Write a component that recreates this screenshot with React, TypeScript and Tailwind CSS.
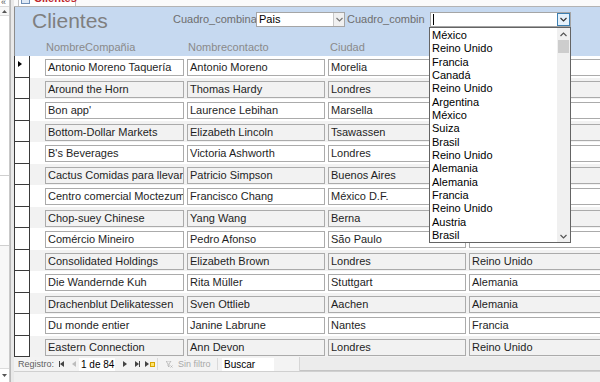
import React from "react";

// country of rows 1-9 sits under the open list, so it's left blank here
const records: [string, string, string, string][] = [
  ["Antonio Moreno Taquería", "Antonio Moreno", "Morelia", ""],
  ["Around the Horn", "Thomas Hardy", "Londres", ""],
  ["Bon app'", "Laurence Lebihan", "Marsella", ""],
  ["Bottom-Dollar Markets", "Elizabeth Lincoln", "Tsawassen", ""],
  ["B's Beverages", "Victoria Ashworth", "Londres", ""],
  ["Cactus Comidas para llevar", "Patricio Simpson", "Buenos Aires", ""],
  ["Centro comercial Moctezuma", "Francisco Chang", "México D.F.", ""],
  ["Chop-suey Chinese", "Yang Wang", "Berna", ""],
  ["Comércio Mineiro", "Pedro Afonso", "São Paulo", ""],
  ["Consolidated Holdings", "Elizabeth Brown", "Londres", "Reino Unido"],
  ["Die Wandernde Kuh", "Rita Müller", "Stuttgart", "Alemania"],
  ["Drachenblut Delikatessen", "Sven Ottlieb", "Aachen", "Alemania"],
  ["Du monde entier", "Janine Labrune", "Nantes", "Francia"],
  ["Eastern Connection", "Ann Devon", "Londres", "Reino Unido"],
];

const paises = [
  "México",
  "Reino Unido",
  "Francia",
  "Canadá",
  "Reino Unido",
  "Argentina",
  "México",
  "Suiza",
  "Brasil",
  "Reino Unido",
  "Alemania",
  "Alemania",
  "Francia",
  "Reino Unido",
  "Austria",
  "Brasil",
];

const widths = ["w-[139px]", "w-[138px]", "w-[138px]", "w-[140px]"];

function Chevron({ up = false, color = "#444" }: { up?: boolean; color?: string }) {
  return (
    <svg width="7" height="5" viewBox="0 0 7 5">
      <path
        d={up ? "M0.5 4 L3.5 1 L6.5 4" : "M0.5 1 L3.5 4 L6.5 1"}
        fill="none"
        stroke={color}
        strokeWidth="1.2"
      />
    </svg>
  );
}

function Combo({ value, active, className }: { value: string; active?: boolean; className: string }) {
  return (
    <div className={`flex h-[15px] shrink-0 items-stretch border border-[#a5a5a5] bg-white ${className}`}>
      <div className="flex-1 pl-[2px] text-[11px] leading-[13px] text-black">
        {value || <span className="inline-block h-[11px] w-px translate-y-[1px] bg-black" />}
      </div>
      <div
        className={
          active
            ? "flex w-[13px] items-center justify-center border border-[#3c7fb1] bg-[#e5f1fb]"
            : "flex w-[11px] items-center justify-center border-l border-[#c8c8c8] bg-[#f0f0f0]"
        }
      >
        <Chevron color={active ? "#333" : "#777"} />
      </div>
    </div>
  );
}

function NavTri({ dir, color }: { dir: "l" | "r"; color: string }) {
  return (
    <svg width="4" height="6" viewBox="0 0 4 6">
      <path d={dir === "l" ? "M4 0 L0 3 L4 6 Z" : "M0 0 L4 3 L0 6 Z"} fill={color} />
    </svg>
  );
}

export default function App() {
  return (
    <div className="flex h-[382px] w-[600px] overflow-hidden bg-[#f0f0f0] font-['Liberation_Sans',Arial,sans-serif]">
      {/* Navigation pane */}
      <div className="flex w-[10px] shrink-0 flex-col overflow-hidden border-r border-[#c9c9c9] bg-white">
        <div className="h-[6px] -translate-y-[2px] pl-px text-[9px] leading-[8px] text-[#555]">«</div>
        <div className="flex h-[10px] items-center justify-center border-y border-[#dcdcdc] bg-[#f7f7f7]">
          <svg width="5" height="3" viewBox="0 0 5 3">
            <path d="M0 3 L2.5 0 L5 3 Z" fill="#555" />
          </svg>
        </div>
        <div className="h-[160px] border-b border-[#cfcfcf]" />
        <div className="h-[70px] border-b border-[#cfcfcf]" />
        <div className="flex-1 bg-[#f7f7f7]" />
        <div className="flex h-[14px] items-center justify-center border-t border-[#dcdcdc]">
          <svg width="5" height="3" viewBox="0 0 5 3">
            <path d="M0 0 L2.5 3 L5 0 Z" fill="#555" />
          </svg>
        </div>
      </div>
      <div className="w-[4px] shrink-0 border-l border-[#b9b9b9] bg-[#e9e9e9]" />

      {/* Form */}
      <div className="relative flex min-w-0 flex-1 flex-col overflow-hidden">
        {/* tab strip */}
        <div className="h-[7px] overflow-hidden border-b border-[#b3b3b3] bg-[#fafafa]">
          <div className="ml-[4px] flex h-[20px] w-[58px] -translate-y-[13px] items-end gap-[4px] border-x border-[#c2c2c2] bg-white px-[2px] pb-[3px]">
            <div className="h-[5px] w-[9px] shrink-0 border border-[#6f8fb7] bg-[#dfe9f5]" />
            <span className="text-[11px] font-bold leading-[12px] text-[#c0272d]">Clientes</span>
          </div>
        </div>

        {/* header */}
        <div className="h-[49px] shrink-0 border-l border-[#8c8c8c] bg-[#c6d9f0]">
          <div className="flex items-start">
            <div className="mt-[2px] w-[158px] shrink-0 pl-[17px] text-[21px] leading-[24px] text-[#7f7f7f]">
              Clientes
            </div>
            <div className="mt-[5px] w-[83px] shrink-0 text-[11px] leading-[15px] text-[#6e6e6e]">Cuadro_combina</div>
            <Combo value="Pais" className="mt-[5px] w-[89px]" />
            <div className="mt-[5px] w-[85px] shrink-0 pl-[2px] text-[11px] leading-[15px] text-[#6e6e6e]">
              Cuadro_combin
            </div>
            <Combo value="" active className="mt-[5px] w-[141px]" />
          </div>
          <div className="mt-[8px] flex text-[11px] leading-[13px] text-[#8a8a8a]">
            <div className="w-[173px] shrink-0 pl-[31px]">NombreCompañia</div>
            <div className="w-[142px] shrink-0">Nombrecontacto</div>
            <div className="w-[141px] shrink-0">Ciudad</div>
          </div>
        </div>

        {/* detail rows */}
        <div className="flex flex-col">
          {records.map((r, i) => (
            <div key={i} className={`flex h-[21.5px] ${i % 2 ? "bg-[#f2f2f2]" : "bg-white"}`}>
              <div className="flex w-[16px] shrink-0 items-start border-x border-b border-[#3a3a3a] bg-white pl-[3px] pt-[5px]">
                {i === 0 && <NavTri dir="r" color="#000" />}
              </div>
              <div className="flex gap-[3px] pl-[15px] pt-[3px]">
                {r.map((v, j) => (
                  <div
                    key={j}
                    className={`h-[17px] shrink-0 ${widths[j]} overflow-hidden whitespace-nowrap border border-[#ababab] pl-[2px] text-[11px] leading-[15px] text-[#1e1e1e] ${
                      i % 2 ? "bg-[#f2f2f2]" : "bg-white"
                    }`}
                  >
                    {v}
                  </div>
                ))}
              </div>
            </div>
          ))}
        </div>

        {/* navigation bar */}
        <div className="flex h-[14px] shrink-0 items-center bg-[#f3f3f3] text-[9px] leading-[12px]">
          <div className="flex h-full w-[286px] shrink-0 items-center border-r border-[#d6d6d6]">
            <span className="ml-[4px] w-[41px] shrink-0 text-[#5f5f5f]">Registro:</span>
            <div className="flex w-[13px] items-center">
              <div className="h-[6px] w-px bg-[#444]" />
              <NavTri dir="l" color="#444" />
            </div>
            <div className="w-[7px]">
              <NavTri dir="l" color="#bdbdbd" />
            </div>
            <div className="h-[13px] w-[36px] bg-white pl-[2px] text-[10px] leading-[13px] text-black">1 de 84</div>
            <div className="ml-[8px] w-[12px]">
              <NavTri dir="r" color="#444" />
            </div>
            <div className="flex w-[10px] items-center">
              <NavTri dir="r" color="#444" />
              <div className="h-[6px] w-px bg-[#444]" />
            </div>
            <div className="flex w-[12px] items-center">
              <NavTri dir="r" color="#444" />
              <div className="ml-px h-[5px] w-[5px] border border-[#d6a400] bg-[#ffe36b]" />
            </div>
            <div className="h-[12px] w-px bg-[#dadada]" />
            <svg className="ml-[8px]" width="7" height="7" viewBox="0 0 7 7">
              <path d="M0 0 H5 L3 3 V6 L2 5 V3 Z" fill="none" stroke="#b0b0b0" strokeWidth="0.8" />
              <path d="M4.5 4.5 L6.5 6.5 M6.5 4.5 L4.5 6.5" stroke="#b0b0b0" strokeWidth="0.8" />
            </svg>
            <span className="ml-[5px] w-[39px] shrink-0 text-[#a8a8a8]">Sin filtro</span>
            <div className="h-[12px] w-px bg-[#dadada]" />
            <div className="ml-[4px] h-[13px] w-[52px] bg-white pl-[2px] text-[10px] leading-[13px] text-black">Buscar</div>
          </div>
          <div className="h-full flex-1 border-b border-[#c4c4c4] bg-[#ececec]" />
        </div>
        <div className="flex-1 border-t border-[#d0d0d0] bg-[#f0f0f0]" />

        {/* open combo list */}
        <div className="absolute left-[415px] top-[27px] flex h-[216px] w-[142px] border border-[#646464] bg-white">
          <div className="flex-1 pl-[2px] pt-[1px] text-[11px] leading-[13.35px] text-black">
            {paises.map((p, i) => (
              <div key={i}>{p}</div>
            ))}
          </div>
          <div className="flex w-[13px] flex-col bg-[#f0f0f0]">
            <div className="flex h-[12px] items-center justify-center">
              <Chevron up color="#555" />
            </div>
            <div className="mx-px h-[13px] bg-[#cdcdcd]" />
            <div className="flex-1" />
            <div className="flex h-[12px] items-center justify-center">
              <Chevron color="#555" />
            </div>
          </div>
        </div>
      </div>
    </div>
  );
}
